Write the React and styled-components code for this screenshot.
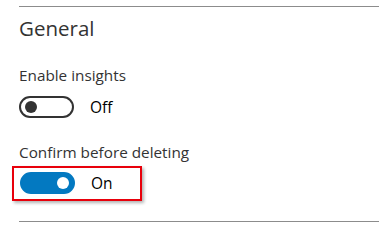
import React from "react";
import styled, { createGlobalStyle } from "styled-components";

const Global = createGlobalStyle`
  body {
    margin: 0;
    background: #fff;
    font-family: "Open Sans", "Noto Sans", sans-serif;
  }
`;

const Panel = styled.section`
  display: flex;
  flex-direction: column;
  width: 360px;
  padding: 6px 0 0 19px;
`;

const Rule = styled.hr`
  margin: ${(p) => p.$gap || 0}px 0 0;
  border: none;
  height: 1px;
  background: #8c8c8c;
`;

const Heading = styled.h2`
  margin: 7px 0 0;
  font-size: 20.5px;
  line-height: 28px;
  font-weight: 400;
  color: #333;
`;

const Label = styled.div`
  margin-top: ${(p) => p.$gap}px;
  font-size: 15.3px;
  line-height: 20px;
  color: #333;
`;

const Row = styled.div`
  display: flex;
  align-items: center;
  gap: 16px;
  margin-top: 11px;
`;

const Highlight = styled.div`
  display: flex;
  align-items: center;
  gap: 16px;
  width: 120px;
  margin: 4px 0 0 -7px;
  padding: 4px 0 5px 6px;
  border: 2px solid #e8000b;
  box-shadow: 2px 2px 3px rgba(0, 0, 0, 0.3);
`;

const Track = styled.div`
  box-sizing: border-box;
  width: 55px;
  height: 22px;
  border-radius: 11px;
  border: 2px solid ${(p) => (p.$on ? "#0379c1" : "#333")};
  background: ${(p) => (p.$on ? "#0379c1" : "#fff")};
  display: flex;
  align-items: center;
  justify-content: ${(p) => (p.$on ? "flex-end" : "flex-start")};
  padding: 0 4px;
`;

const Knob = styled.div`
  width: 12px;
  height: 12px;
  border-radius: 50%;
  background: ${(p) => (p.$on ? "#fff" : "#333")};
`;

const State = styled.span`
  font-size: 15.5px;
  line-height: 20px;
  color: #000;
`;

function Toggle({ on }) {
  return (
    <Track $on={on}>
      <Knob $on={on} />
    </Track>
  );
}

export default function App() {
  return (
    <>
      <Global />
      <Panel>
        <Rule />
        <Heading>General</Heading>
        <Label $gap={23}>Enable insights</Label>
        <Row>
          <Toggle on={false} />
          <State>Off</State>
        </Row>
        <Label $gap={24}>Confirm before deleting</Label>
        <Highlight>
          <Toggle on />
          <State>On</State>
        </Highlight>
        <Rule $gap={20} />
      </Panel>
    </>
  );
}
